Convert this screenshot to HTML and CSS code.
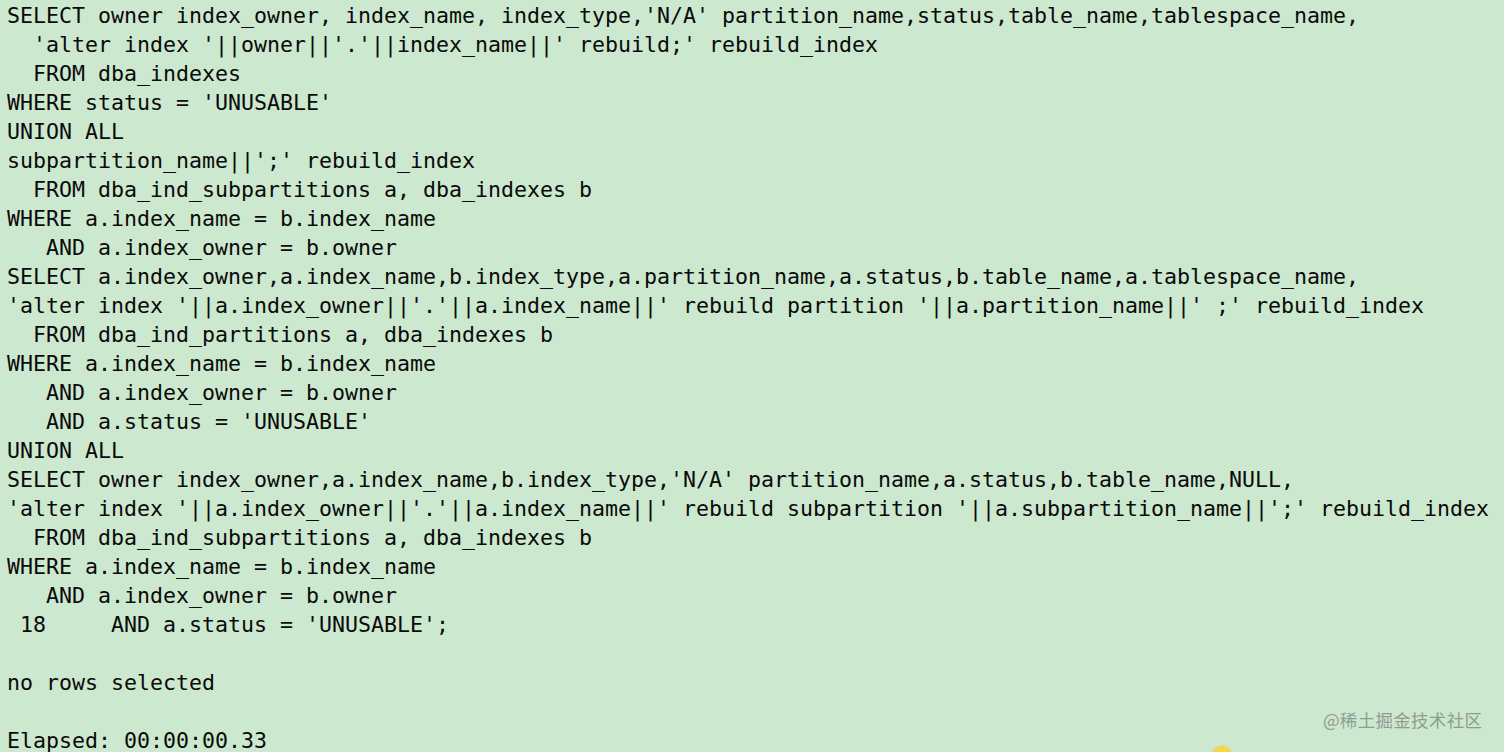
FILE: index.html
```html
<!DOCTYPE html>
<html>
<head>
<meta charset="utf-8">
<link rel="stylesheet" href="styles.css">
</head>
<body>
<pre class="term">SELECT owner index_owner, index_name, index_type,'N/A' partition_name,status,table_name,tablespace_name,
  'alter index '||owner||'.'||index_name||' rebuild;' rebuild_index
  FROM dba_indexes
WHERE status = 'UNUSABLE'
UNION ALL
subpartition_name||';' rebuild_index
  FROM dba_ind_subpartitions a, dba_indexes b
WHERE a.index_name = b.index_name
   AND a.index_owner = b.owner
SELECT a.index_owner,a.index_name,b.index_type,a.partition_name,a.status,b.table_name,a.tablespace_name,
'alter index '||a.index_owner||'.'||a.index_name||' rebuild partition '||a.partition_name||' ;' rebuild_index
  FROM dba_ind_partitions a, dba_indexes b
WHERE a.index_name = b.index_name
   AND a.index_owner = b.owner
   AND a.status = 'UNUSABLE'
UNION ALL
SELECT owner index_owner,a.index_name,b.index_type,'N/A' partition_name,a.status,b.table_name,NULL,
'alter index '||a.index_owner||'.'||a.index_name||' rebuild subpartition '||a.subpartition_name||';' rebuild_index</pre>
<pre class="term term-tail">  FROM dba_ind_subpartitions a, dba_indexes b
WHERE a.index_name = b.index_name
   AND a.index_owner = b.owner
 18     AND a.status = 'UNUSABLE';

no rows selected

Elapsed: 00:00:00.33</pre>
<div class="watermark">@稀土掘金技术社区</div>
<div class="blob"></div>
</body>
</html>
```
FILE: styles.css
```css
html, body {
  margin: 0;
  padding: 0;
  width: 1504px;
  height: 752px;
  overflow: hidden;
  background: #cce8cf;
}
body {
  position: relative;
}
.term {
  margin: 0;
  padding: 0 0 0 7px;
  font-family: "DejaVu Sans Mono", "Liberation Mono", monospace;
  font-size: 21.6px;
  line-height: 29px;
  color: #0a0a0a;
  white-space: pre;
  width: fit-content;
}
.term:first-child {
  padding-top: 1px;
}
.watermark {
  position: absolute;
  left: 1323px;
  top: 708px;
  font-family: "Noto Sans CJK SC", "Noto Sans", sans-serif;
  font-size: 17.5px;
  line-height: 24px;
  color: #909c92;
  letter-spacing: 0.3px;
}
.blob {
  position: absolute;
  left: 1212px;
  top: 746px;
  width: 20px;
  height: 20px;
  border-radius: 50%;
  background: #f3d64a;
  box-shadow: 0 0 2px #e8c84a;
}
```
